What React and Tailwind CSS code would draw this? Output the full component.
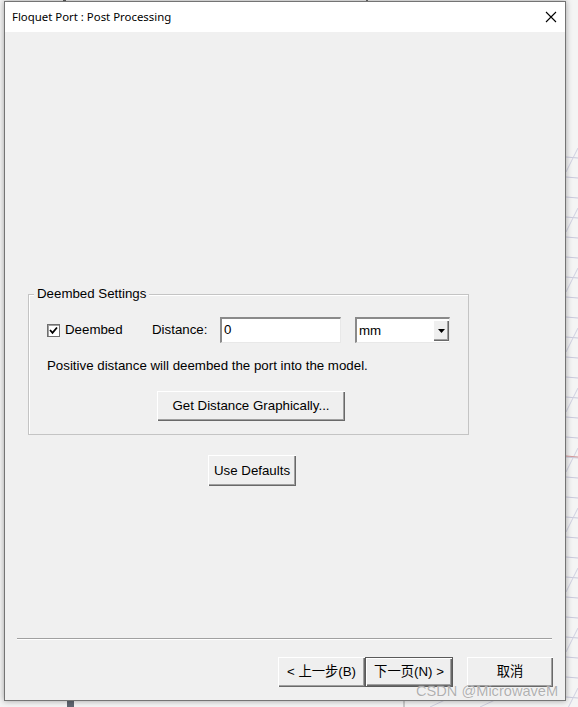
import React from "react";

const ui = { fontFamily: '"Liberation Sans", "Noto Sans CJK SC", Arial, sans-serif' };

function Btn({ children, className = "", isDefault = false }) {
  return (
    <div
      className={
        "flex items-center justify-center h-[30px] text-[13.3px] text-black bg-[#efefef] " +
        (isDefault
          ? "border border-[#5a5a5a] shadow-[inset_1px_1px_0_#ffffff,inset_-1px_-1px_0_#696969,inset_-2px_-2px_0_#a0a0a0] "
          : "shadow-[inset_1px_1px_0_#ffffff,inset_-1px_-1px_0_#696969,inset_-2px_-2px_0_#a0a0a0] ") +
        className
      }
      style={ui}
    >
      {children}
    </div>
  );
}

function BackgroundArt() {
  const ys = [];
  for (let y = 150; y < 707; y += 20) ys.push(y);
  return (
    <svg className="absolute inset-0" width="578" height="707" viewBox="0 0 578 707">
      <rect x="0" y="0" width="578" height="707" fill="#f4f4f4" />
      {ys.map((y, i) => (
        <g key={y}>
          <line x1="566" y1={y + 7} x2="578" y2={y + 8} stroke="#c9c9dc" strokeWidth="1" />
          {i % 3 === 0 && (
            <line x1="566" y1={y + 22} x2="578" y2={y - 2} stroke="#cfcfe0" strokeWidth="1" />
          )}
        </g>
      ))}
      <line x1="566" y1="456" x2="578" y2="457" stroke="#d49a9a" strokeWidth="1" />
      <rect x="63" y="0" width="3" height="2" fill="#5a5a5a" />
      <rect x="366" y="0" width="2" height="2" fill="#6a6a6a" />
      <rect x="67" y="701" width="7" height="6" fill="#5f6670" />
      <line x1="404" y1="700" x2="404" y2="707" stroke="#a0a0a0" />
      <line x1="430" y1="707" x2="445" y2="700" stroke="#d0d0e0" />
      <line x1="480" y1="707" x2="495" y2="700" stroke="#d0d0e0" />
    </svg>
  );
}

export default function App() {
  return (
    <div className="relative w-[578px] h-[707px] overflow-hidden" style={ui}>
      <BackgroundArt />
      <div className="relative pt-[1px] pl-[4px]">
        <div className="w-[562px] h-[700px] border border-[#747474] bg-[#f0f0f0] flex flex-col shadow-[0_0_6px_rgba(0,0,0,0.35)]">
          {/* Title bar */}
          <div className="h-[30px] bg-white flex items-center justify-between pl-[7px] pr-[8px] shrink-0">
            <span
              className="text-[11.4px] text-black"
              style={{ fontFamily: '"Noto Sans", "Open Sans", sans-serif' }}
            >
              Floquet Port : Post Processing
            </span>
            <svg width="12" height="12" viewBox="0 0 12 12">
              <path d="M1 1 L11 11 M11 1 L1 11" stroke="#000" strokeWidth="1.1" />
            </svg>
          </div>

          {/* Content */}
          <div className="flex flex-col flex-1">
            {/* Group box */}
            <div className="relative ml-[23px] mt-[262px] w-[441px] h-[141px] border border-[#c4c4c4] shadow-[inset_1px_1px_0_#ffffff]">
              <span className="absolute -top-[9px] left-[5px] px-[3px] bg-[#f0f0f0] text-[13.3px] leading-[16px] text-black">
                Deembed Settings
              </span>
              <div className="flex flex-col pl-[18px] pt-[22px]">
                <div className="flex items-center h-[26px]">
                  <div className="flex items-center w-[105px]">
                    <div className="w-[13px] h-[13px] bg-white border border-[#6f6f6f] flex items-center justify-center shadow-[inset_1px_1px_0_#a0a0a0]">
                      <svg width="9" height="9" viewBox="0 0 9 9">
                        <path d="M1 4 L3.5 6.8 L8 1.5" stroke="#000" strokeWidth="1.8" fill="none" />
                      </svg>
                    </div>
                    <span className="ml-[5px] text-[13.3px] text-black">Deembed</span>
                  </div>
                  <span className="w-[68px] text-[13.3px] text-black">Distance:</span>
                  <div className="w-[121px] h-[26px] bg-white border-t-2 border-l-2 border-b border-r border-t-[#8a8a8a] border-l-[#8a8a8a] border-b-[#e8e8e8] border-r-[#e8e8e8] flex items-start pl-[2px] pt-[1px] text-[13.3px] text-black">
                    0
                  </div>
                  <div className="ml-[14px] w-[95px] h-[26px] bg-white border-t-2 border-l-2 border-b border-r border-t-[#8a8a8a] border-l-[#8a8a8a] border-b-[#e8e8e8] border-r-[#e8e8e8] flex items-center justify-between">
                    <span className="pl-[2px] text-[13.3px] text-black">mm</span>
                    <div className="w-[16px] h-[21px] bg-[#efefef] flex items-center justify-center shadow-[inset_1px_1px_0_#ffffff,inset_-1px_-1px_0_#696969,inset_-2px_-2px_0_#a0a0a0]">
                      <svg width="7" height="4" viewBox="0 0 7 4">
                        <path d="M0 0 L7 0 L3.5 4 Z" fill="#000" />
                      </svg>
                    </div>
                  </div>
                </div>
                <div className="mt-[15px] h-[16px] leading-[16px] text-[13.3px] text-black">
                  Positive distance will deembed the port into the model.
                </div>
                <Btn className="mt-[17px] ml-[110px] w-[188px]">Get Distance Graphically...</Btn>
              </div>
            </div>

            <Btn className="mt-[20px] ml-[203px] w-[88px] h-[31px]">Use Defaults</Btn>

            {/* Separator */}
            <div className="mt-auto ml-[12px] w-[535px] h-[2px] border-t border-t-[#a0a0a0] border-b border-b-white" />

            {/* Bottom buttons */}
            <div className="flex mt-[17px] mb-[13px] pl-[273px]">
              <Btn className="w-[87px]">&lt; 上一步(B)</Btn>
              <Btn isDefault className="w-[88px]">下一页(N) &gt;</Btn>
              <Btn className="ml-[14px] w-[86px]">取消</Btn>
            </div>
          </div>
        </div>
      </div>
      <span
        className="absolute left-[416px] top-[682px] text-[14.6px] leading-[18px] text-[rgba(150,150,150,0.75)]"
        style={{ fontFamily: '"Liberation Sans", Arial, sans-serif', textShadow: "0 0 1px #fff" }}
      >
        CSDN @MicrowaveM
      </span>
    </div>
  );
}
